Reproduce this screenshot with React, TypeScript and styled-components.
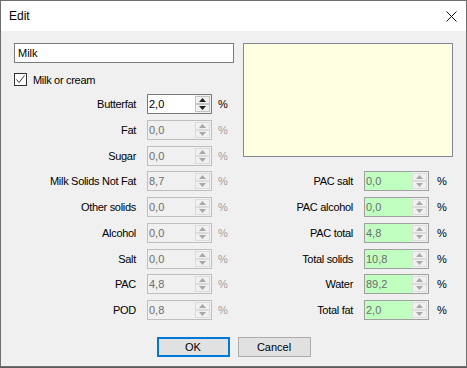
import { Fragment } from 'react';
import styled, { createGlobalStyle } from 'styled-components';

type Tone = 'edit' | 'off' | 'calc';

const GlobalStyle = createGlobalStyle`
  html, body {
    margin: 0;
    padding: 0;
    background: #5a5d55;
  }
  body {
    font-family: "Liberation Sans", Arial, sans-serif;
  }
`;

const leftFields: { label: string; value: string; tone: Tone }[] = [
  { label: 'Milk Solids Not Fat', value: '8,7', tone: 'off' },
  { label: 'Other solids', value: '0,0', tone: 'off' },
  { label: 'Alcohol', value: '0,0', tone: 'off' },
  { label: 'Salt', value: '0,0', tone: 'off' },
  { label: 'PAC', value: '4,8', tone: 'off' },
  { label: 'POD', value: '0,8', tone: 'off' },
];

const rightFields: { label: string; value: string; tone: Tone }[] = [
  { label: 'PAC salt', value: '0,0', tone: 'calc' },
  { label: 'PAC alcohol', value: '0,0', tone: 'calc' },
  { label: 'PAC total', value: '4,8', tone: 'calc' },
  { label: 'Total solids', value: '10,8', tone: 'calc' },
  { label: 'Water', value: '89,2', tone: 'calc' },
  { label: 'Total fat', value: '2,0', tone: 'calc' },
];

const Arrow = ({ up, dim }: { up?: boolean; dim?: boolean }) => (
  <svg width="7" height="4" viewBox="0 0 7 4">
    <path
      d={up ? 'M0 4 L3.5 0 L7 4 Z' : 'M0 0 L3.5 4 L7 0 Z'}
      fill={dim ? '#a8a8a8' : '#202020'}
    />
  </svg>
);

const Field = ({
  label,
  value,
  tone,
  side,
}: {
  label: string;
  value: string;
  tone: Tone;
  side: 'left' | 'right';
}) => (
  <Row>
    <Label $w={side === 'left' ? 122 : 110}>{label}</Label>
    <SpinBox $tone={tone}>
      <Value $tone={tone}>{value}</Value>
      <Spinner>
        <SpinBtn $dim={tone !== 'edit'}>
          <Arrow up dim={tone !== 'edit'} />
        </SpinBtn>
        <SpinBtn $dim={tone !== 'edit'}>
          <Arrow dim={tone !== 'edit'} />
        </SpinBtn>
      </Spinner>
    </SpinBox>
    <Pct $dim={tone === 'off'} $gap={side === 'left' ? 6 : 8}>
      %
    </Pct>
  </Row>
);

const App = () => {
  return (
    <>
      <GlobalStyle />
      <Window>
        <TitleBar>
          <Title>Edit</Title>
          <CloseBtn>
            <svg width="11" height="11" viewBox="0 0 11 11">
              <path d="M0.5 0.5 L10.5 10.5 M10.5 0.5 L0.5 10.5" stroke="#111" strokeWidth="1" />
            </svg>
          </CloseBtn>
        </TitleBar>
        <Body>
          <Form>
            <TopLeft>
              <NameInput>Milk</NameInput>
              <CheckRow>
                <CheckBox>
                  <svg width="11" height="11" viewBox="0 0 11 11">
                    <path d="M1.5 5.5 L4 8.5 L9.5 1.5" stroke="#333" strokeWidth="1" fill="none" />
                  </svg>
                </CheckBox>
                <CheckLabel>Milk or cream</CheckLabel>
              </CheckRow>
              <Stack>
                <Field label="Butterfat" value="2,0" tone="edit" side="left" />
                <Field label="Fat" value="0,0" tone="off" side="left" />
                <Field label="Sugar" value="0,0" tone="off" side="left" />
              </Stack>
            </TopLeft>
            <Memo />
            {leftFields.map((f, i) => (
              <Fragment key={f.label}>
                <Field {...f} side="left" />
                <Field {...rightFields[i]} side="right" />
              </Fragment>
            ))}
          </Form>
          <ButtonBar>
            <Button $default>OK</Button>
            <Button>Cancel</Button>
          </ButtonBar>
        </Body>
      </Window>
    </>
  );
};

const Window = styled.div`
  width: 467px;
  height: 367px;
  box-sizing: border-box;
  border: 1px solid #6e6e6e;
  display: flex;
  flex-direction: column;
  background: #f0f0f0;
`;

const TitleBar = styled.div`
  height: 30px;
  background: #ffffff;
  display: flex;
  align-items: center;
  justify-content: space-between;
  padding: 0 9px 0 8px;
`;

const Title = styled.span`
  font-size: 12px;
  color: #000;
`;

const CloseBtn = styled.div`
  width: 11px;
  height: 11px;
  display: flex;
`;

const Body = styled.div`
  flex: 1;
  display: flex;
  flex-direction: column;
  background: #f0f0f0;
`;

const Form = styled.div`
  display: grid;
  grid-template-columns: 229px auto;
  row-gap: 5.75px;
  align-items: start;
  padding: 12px 0 0 13px;
`;

const TopLeft = styled.div`
  display: flex;
  flex-direction: column;
`;

const NameInput = styled.div`
  width: 220px;
  height: 20px;
  box-sizing: border-box;
  border: 1px solid #7a7a7a;
  background: #fff;
  padding-left: 3px;
  font-size: 11px;
  line-height: 18px;
  color: #000;
`;

const CheckRow = styled.div`
  display: flex;
  align-items: center;
  height: 13px;
  margin-top: 10px;
`;

const CheckBox = styled.div`
  width: 13px;
  height: 13px;
  box-sizing: border-box;
  border: 1px solid #333;
  background: #fff;
  display: flex;
  align-items: center;
  justify-content: center;
`;

const CheckLabel = styled.span`
  margin-left: 6px;
  font-size: 11px;
  letter-spacing: -0.3px;
  color: #000;
`;

const Stack = styled.div`
  display: flex;
  flex-direction: column;
  gap: 5.75px;
  margin-top: 8px;
`;

const Memo = styled.div`
  width: 210px;
  height: 114px;
  box-sizing: border-box;
  border: 1px solid #828790;
  background: #ffffe1;
`;

const Row = styled.div`
  display: flex;
  align-items: center;
  height: 20px;
`;

const Label = styled.span<{ $w: number }>`
  width: ${(p) => p.$w}px;
  margin-right: 11px;
  text-align: right;
  font-size: 11px;
  letter-spacing: -0.3px;
  color: #000;
  white-space: nowrap;
`;

const SpinBox = styled.div<{ $tone: Tone }>`
  width: 65px;
  height: 20px;
  box-sizing: border-box;
  display: flex;
  border: 1px solid ${(p) => (p.$tone === 'edit' ? '#7a7a7a' : p.$tone === 'calc' ? '#a0a0a0' : '#bfbfbf')};
  background: ${(p) => (p.$tone === 'edit' ? '#ffffff' : p.$tone === 'calc' ? '#c0ffc0' : '#f0f0f0')};
`;

const Value = styled.span<{ $tone: Tone }>`
  flex: 1;
  padding-left: 1px;
  font-size: 11px;
  line-height: 18px;
  color: ${(p) => (p.$tone === 'edit' ? '#000' : '#6d6d6d')};
`;

const Spinner = styled.div`
  width: 15px;
  display: flex;
  flex-direction: column;
  padding: 1px 1px 1px 0;
  background: #f0f0f0;
`;

const SpinBtn = styled.div<{ $dim?: boolean }>`
  flex: 1;
  display: flex;
  align-items: center;
  justify-content: center;
  box-sizing: border-box;
  border: 1px solid ${(p) => (p.$dim ? '#dcdcdc' : '#c4c4c4')};
  background: #f0f0f0;
`;

const Pct = styled.span<{ $dim?: boolean; $gap: number }>`
  margin-left: ${(p) => p.$gap}px;
  font-size: 11px;
  color: ${(p) => (p.$dim ? '#a0a0a0' : '#000')};
`;

const ButtonBar = styled.div`
  display: flex;
  justify-content: center;
  gap: 8px;
  margin-top: 17px;
`;

const Button = styled.div<{ $default?: boolean }>`
  width: 73px;
  height: 20px;
  box-sizing: border-box;
  display: flex;
  align-items: center;
  justify-content: center;
  background: #e1e1e1;
  border: ${(p) => (p.$default ? '2px solid #0078d7' : '1px solid #adadad')};
  font-size: 11px;
  color: #000;
`;

export default App;
